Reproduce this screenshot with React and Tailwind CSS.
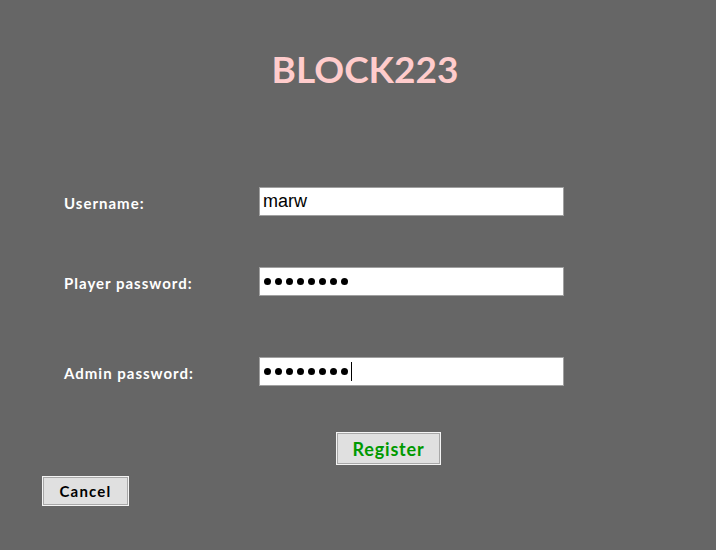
import React from 'react';

const font = { fontFamily: 'Lato, "DejaVu Sans", sans-serif' };

function Field({ label, children, className = '' }) {
    return (
        <div className={`grid grid-cols-[195px_305px] items-center ${className}`}>
            <span className="text-[15px] font-bold text-white tracking-[1px] pt-[3px]">{label}</span>
            <div className="h-[29px] border border-[#a0a0a0] bg-white flex items-center pl-[3px] text-black text-[18px] font-['Liberation_Sans',sans-serif]">
                {children}
            </div>
        </div>
    );
}

function Dots({ caret }) {
    return (
        <div className="flex items-center gap-[4px] pl-px">
            {Array.from({ length: 8 }).map((_, i) => (
                <span key={i} className="w-[7px] h-[7px] rounded-full bg-black" />
            ))}
            {caret && <span className="w-px h-[19px] bg-black ml-[-1px]" />}
        </div>
    );
}

export default function App() {
    return (
        <div className="w-[716px] h-[550px] bg-[#666666] flex flex-col" style={font}>
            <h1 className="mt-[47px] pl-[14px] text-center text-[37px] leading-[44px] font-bold text-[#ffcccc]">
                BLOCK223
            </h1>

            <div className="mt-[96px] pl-[64px] flex flex-col">
                <Field label="Username:">marw</Field>
                <Field label="Player password:" className="mt-[51px]"><Dots /></Field>
                <Field label="Admin password:" className="mt-[61px]"><Dots caret /></Field>
            </div>

            <div className="mt-[46px] pl-[336px]">
                <button className="w-[105px] h-[33px] bg-[#e0e0e0] border border-[#f4f4f4] shadow-[inset_0_0_0_1px_#a8a8a8] text-[#009900] text-[18px] font-bold tracking-[0.8px] pt-[1px]">
                    Register
                </button>
            </div>

            <div className="mt-[11px] pl-[42px]">
                <button className="w-[87px] h-[30px] bg-[#e0e0e0] border border-[#f4f4f4] shadow-[inset_0_0_0_1px_#a8a8a8] text-black text-[15px] font-bold tracking-[1.2px]">
                    Cancel
                </button>
            </div>
        </div>
    );
}
